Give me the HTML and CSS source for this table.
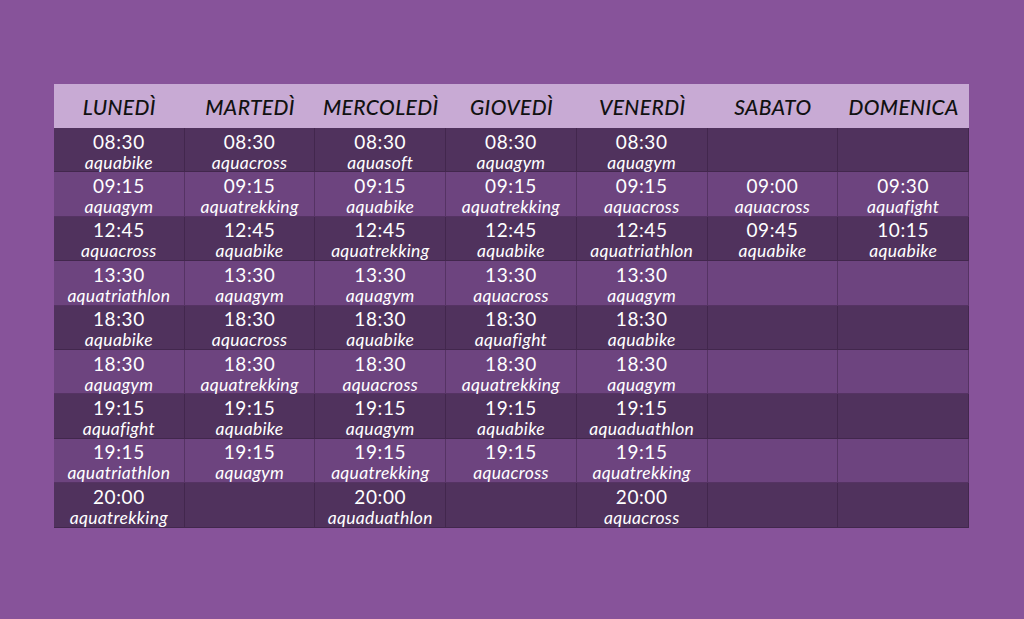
FILE: index.html
```html
<!DOCTYPE html>
<html lang="it">
<head>
  <meta charset="UTF-8">
  <title>Orari corsi</title>
  <link rel="stylesheet" href="styles.css">
</head>
<body>
  <div class="schedule">
    <div class="head">LUNEDÌ</div>
    <div class="head">MARTEDÌ</div>
    <div class="head">MERCOLEDÌ</div>
    <div class="head">GIOVEDÌ</div>
    <div class="head">VENERDÌ</div>
    <div class="head">SABATO</div>
    <div class="head">DOMENICA</div>
  </div>

  <script>
    // one array per row, one entry per day: [time, course] or null
    const rows = [
      [['08:30','aquabike'],['08:30','aquacross'],['08:30','aquasoft'],['08:30','aquagym'],['08:30','aquagym'],null,null],
      [['09:15','aquagym'],['09:15','aquatrekking'],['09:15','aquabike'],['09:15','aquatrekking'],['09:15','aquacross'],['09:00','aquacross'],['09:30','aquafight']],
      [['12:45','aquacross'],['12:45','aquabike'],['12:45','aquatrekking'],['12:45','aquabike'],['12:45','aquatriathlon'],['09:45','aquabike'],['10:15','aquabike']],
      [['13:30','aquatriathlon'],['13:30','aquagym'],['13:30','aquagym'],['13:30','aquacross'],['13:30','aquagym'],null,null],
      [['18:30','aquabike'],['18:30','aquacross'],['18:30','aquabike'],['18:30','aquafight'],['18:30','aquabike'],null,null],
      [['18:30','aquagym'],['18:30','aquatrekking'],['18:30','aquacross'],['18:30','aquatrekking'],['18:30','aquagym'],null,null],
      [['19:15','aquafight'],['19:15','aquabike'],['19:15','aquagym'],['19:15','aquabike'],['19:15','aquaduathlon'],null,null],
      [['19:15','aquatriathlon'],['19:15','aquagym'],['19:15','aquatrekking'],['19:15','aquacross'],['19:15','aquatrekking'],null,null],
      [['20:00','aquatrekking'],null,['20:00','aquaduathlon'],null,['20:00','aquacross'],null,null]
    ];

    const grid = document.querySelector('.schedule');
    rows.forEach(function(row, i) {
      row.forEach(function(slot) {
        const cell = document.createElement('div');
        cell.className = 'cell ' + (i % 2 ? 'light' : 'dark');
        if (slot) {
          cell.innerHTML = '<span class="time">' + slot[0] + '</span><span class="course">' + slot[1] + '</span>';
        }
        grid.appendChild(cell);
      });
    });
  </script>
</body>
</html>
```

FILE: styles.css
```css
body {
  background-color: #87539a;
  margin: 0;
  padding: 84px 55px 0 54px;
  font-family: 'Lato', 'Open Sans', sans-serif;
}

.schedule {
  display: grid;
  grid-template-columns: repeat(7, 1fr);
  grid-template-rows: 44px repeat(9, 44.4px);
  width: 915px;
}

.head {
  background-color: #c8aad4;
  color: #111;
  font-size: 21px;
  font-style: italic;
  font-weight: 500;
  display: flex;
  align-items: center;
  justify-content: center;
  letter-spacing: 0.4px;
}

.cell {
  display: flex;
  flex-direction: column;
  align-items: center;
  justify-content: center;
  color: #fff;
  border-right: 1px solid rgba(40, 20, 50, 0.35);
  border-bottom: 1px solid rgba(40, 20, 50, 0.35);
  padding-top: 4px;
}

.cell.dark {
  background-color: #50325d;
}

.cell.light {
  background-color: #6d447f;
}

.time {
  font-size: 19px;
  line-height: 21px;
  letter-spacing: 0.6px;
}

.course {
  font-size: 17.5px;
  line-height: 21px;
  font-style: italic;
  letter-spacing: 0.3px;
}
```
